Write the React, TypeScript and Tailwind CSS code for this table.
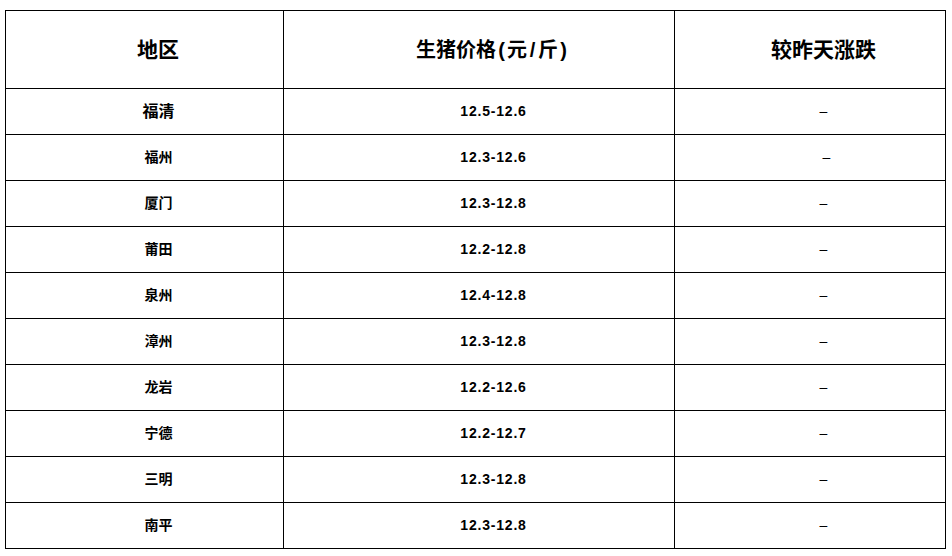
import React from "react";

const rows = [
  { region: "福清", price: "12.5-12.6", big: true },
  { region: "福州", price: "12.3-12.6", shift: true },
  { region: "厦门", price: "12.3-12.8" },
  { region: "莆田", price: "12.2-12.8" },
  { region: "泉州", price: "12.4-12.8" },
  { region: "漳州", price: "12.3-12.8" },
  { region: "龙岩", price: "12.2-12.6" },
  { region: "宁德", price: "12.2-12.7" },
  { region: "三明", price: "12.3-12.8" },
  { region: "南平", price: "12.3-12.8" },
];

// half-width punctuation in the header is wider in the source font
const P: React.FC<{ c: string }> = ({ c }) => (
  <span className="inline-block w-[11px] text-center">{c}</span>
);

export default function App() {
  return (
    <div className="min-h-[556px] w-[952px] bg-white pt-[10px] pl-[5px] font-['Liberation_Sans','Noto_Sans_CJK_SC',sans-serif] text-black">
      <table className="w-[940px] table-fixed border-collapse">
        <colgroup>
          <col className="w-[278px]" />
          <col className="w-[391px]" />
          <col className="w-[271px]" />
        </colgroup>
        <thead>
          {/* header */}
          <tr className="h-[78px]">
            <th className="border border-black pl-[27px] text-center text-[21px] font-bold">地区</th>
            <th className="border border-black pl-[27px] text-center text-[20px] font-bold">
              生猪价格<P c="(" />元<P c="/" />斤<P c=")" />
            </th>
            <th className="border border-black pl-[27px] text-center text-[21px] font-bold">较昨天涨跌</th>
          </tr>
        </thead>
        <tbody>
          {rows.map((r) => (
            <tr key={r.region} className="h-[46px]">
              <td
                className={`border border-black pl-[28px] text-center font-bold ${
                  r.big ? "text-[16px]" : "text-[14px]"
                }`}
              >
                {r.region}
              </td>
              <td className="border border-black pl-[29px] text-center text-[14px] font-bold tracking-[0.8px]">
                {r.price}
              </td>
              <td
                className={`border border-black text-center text-[14px] ${
                  r.shift ? "pl-[33px]" : "pl-[27px]"
                }`}
              >
                –
              </td>
            </tr>
          ))}
        </tbody>
      </table>
    </div>
  );
}
